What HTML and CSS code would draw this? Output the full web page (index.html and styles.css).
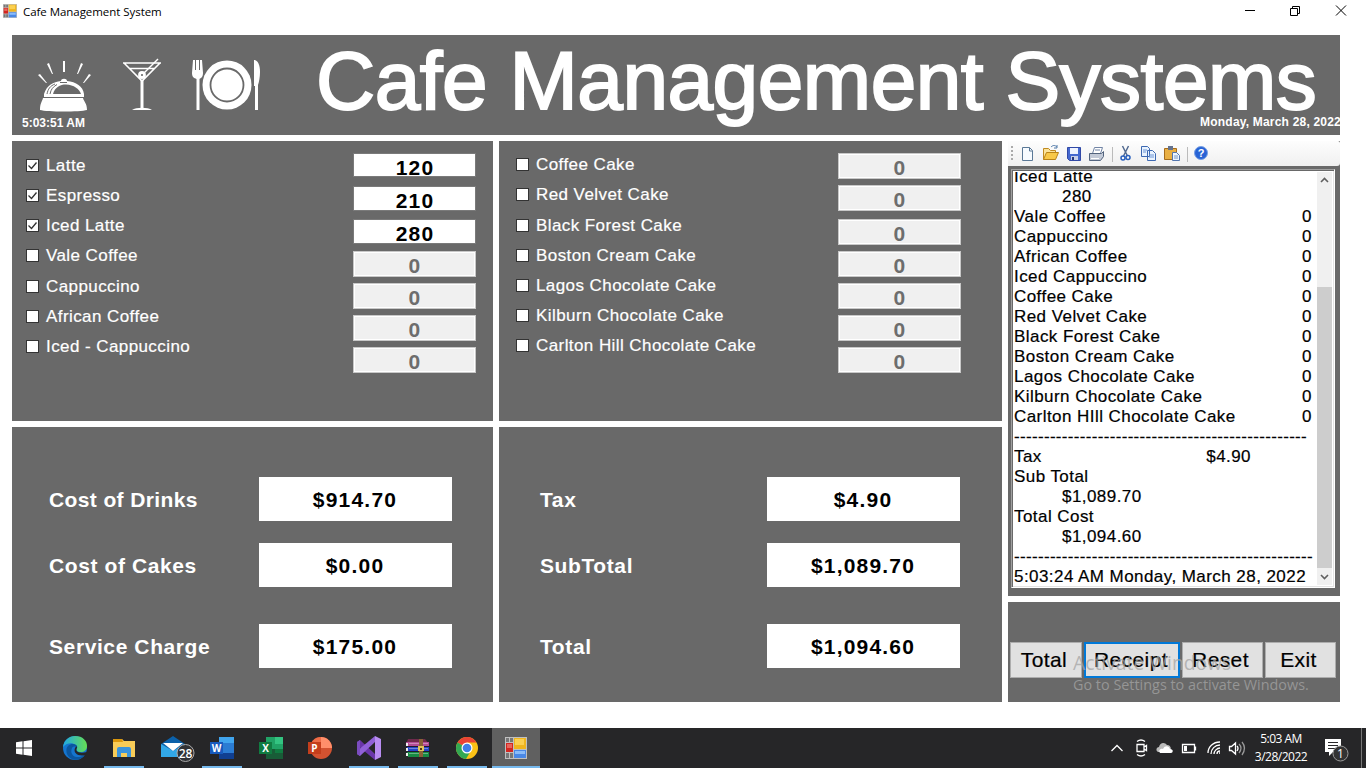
FILE: index.html
```html
<!DOCTYPE html>
<html lang="en">
<head>
<meta charset="utf-8">
<title>Cafe Management System</title>
<link rel="stylesheet" href="styles.css">
</head>
<body>
<div class="window">
  <div class="titlebar">
    <svg class="app-icon" width="14" height="14" viewBox="0 0 22 22"><use href="#forms"/></svg>
    <span class="caption">Cafe Management System</span>
    <svg class="controls" width="104" height="14" viewBox="0 0 104 14" fill="none" stroke="#000" stroke-width="1"><path d="M1 6.500h10"/><path d="M46.500 4.500h7v7h-7zM48.500 4.500v-2h7v7h-2"/><path d="M92 1.500l10 10M102 1.500l-10 10"/></svg>
  </div>
  <div class="header">
    <div class="brand">
      <div class="pictures">
        <svg class="bell" width="54" height="52" viewBox="0 0 54 52" fill="#fff"><path d="M25 1h2v11h-2zM9 4l2-1 4 11h-1zM43 3l2 1-5 10h-1zM0 15l2-1 7 9h-1zM51 14l2 1-7 8h-1z"/><path d="M6 34c3-9 9-12 17-13 0-3 6-3 6 0 9 1 16 5 17 13v3H6z"/><path d="M5 38h40c1 4 4 5 4 12-7 2-40 2-47 0 0-7 2-8 3-12z"/><path d="M7 37.500h38" stroke="#696969" stroke-width="1.200"/><path d="M15 34c2-7 7-9.500 13-9.500 8 .5 13 4 15 9.500z" fill="#696969"/><path d="M9 34c1-5 3-8 8-10M12 34c1-5 3-7 7-9.500M22 22.500h7" fill="none" stroke="#696969"/></svg>
        <svg class="martini" width="40" height="54" viewBox="0 0 40 54" fill="none" stroke="#fff"><path d="M1 5h38M2 5l18 18L38 5M8 10.500h24" stroke-width="1.600"/><path d="M36 1L22 15" stroke-width="1.500"/><circle cx="20" cy="17" r="2.500" stroke-width="2.800"/><path d="M20 22v28" stroke-width="3"/><path d="M10 52c4-3 16-3 20 0z" fill="#fff" stroke="none"/></svg>
        <svg class="plate" width="69" height="52" viewBox="0 0 69 52" fill="#fff"><path d="M1 1h2v10h1V1h3v10h1V1h2l1 13c0 4-2 5-3.500 6v31h-3V20C2 19 0 18 0 14z"/><path d="M62 1c4 0 6 5 6 12 0 5-1 10-2 13v25h-3V27h-1z"/><circle cx="35" cy="26" r="24.500"/><circle cx="35" cy="26" r="16.500" fill="none" stroke="#696969" stroke-width="1.800"/></svg>
      </div>
      <div class="time">5:03:51 AM</div>
    </div>
    <h1 class="title">Cafe Management Systems</h1>
    <div class="date">Monday, March 28, 2022</div>
  </div>
  <div class="main">
    <div class="column">
      <div class="panel items drinks">
        <div class="checks">
          <label class="check"><i class="box"><svg width="11" height="11"><path d="M1.500 5.500l3 3 5-6"/></svg></i><span>Latte</span></label>
          <label class="check"><i class="box"><svg width="11" height="11"><path d="M1.500 5.500l3 3 5-6"/></svg></i><span>Espresso</span></label>
          <label class="check"><i class="box"><svg width="11" height="11"><path d="M1.500 5.500l3 3 5-6"/></svg></i><span>Iced Latte</span></label>
          <label class="check"><i class="box"></i><span>Vale Coffee</span></label>
          <label class="check shifted"><i class="box"></i><span>Cappuccino</span></label>
          <label class="check"><i class="box"></i><span>African Coffee</span></label>
          <label class="check"><i class="box"></i><span>Iced - Cappuccino</span></label>
        </div>
        <div class="inputs">
          <div class="qty on first">120</div><div class="qty on">210</div><div class="qty on last">280</div>
          <div class="qty">0</div><div class="qty">0</div><div class="qty">0</div><div class="qty">0</div>
        </div>
      </div>
      <div class="panel costs">
        <div class="cost"><span class="tight">Cost of Drinks</span><b>$914.70</b></div>
        <div class="cost"><span>Cost of Cakes</span><b>$0.00</b></div>
        <div class="cost"><span>Service Charge</span><b>$175.00</b></div>
      </div>
    </div>
    <div class="column middle">
      <div class="panel items cakes">
        <div class="checks">
          <label class="check"><i class="box"></i><span>Coffee Cake</span></label>
          <label class="check"><i class="box"></i><span>Red Velvet Cake</span></label>
          <label class="check shifted"><i class="box"></i><span>Black Forest Cake</span></label>
          <label class="check"><i class="box"></i><span>Boston Cream Cake</span></label>
          <label class="check"><i class="box"></i><span>Lagos Chocolate Cake</span></label>
          <label class="check"><i class="box"></i><span>Kilburn Chocolate Cake</span></label>
          <label class="check"><i class="box"></i><span>Carlton Hill Chocolate Cake</span></label>
        </div>
        <div class="inputs">
          <div class="qty">0</div><div class="qty spaced">0</div><div class="qty">0</div><div class="qty">0</div><div class="qty">0</div><div class="qty">0</div><div class="qty">0</div>
        </div>
      </div>
      <div class="panel costs totals">
        <div class="cost"><span>Tax</span><b>$4.90</b></div>
        <div class="cost"><span>SubTotal</span><b>$1,089.70</b></div>
        <div class="cost"><span>Total</span><b>$1,094.60</b></div>
      </div>
    </div>
    <div class="column side">
      <div class="panel receipt-panel">
        <div class="toolbar">
          <svg width="332" height="25" viewBox="0 0 332 25">
            <path d="M4 5v16" stroke="#aaa" stroke-width="2" stroke-dasharray="2 2"/>
            <path d="M14.500 6.500h7l3 3v10h-10z" fill="#f7fbff" stroke="#5a7896"/><path d="M21.500 6.500v3.500h3" fill="none" stroke="#5a7896"/>
            <path d="M35.500 18.500v-11h5l2 2h5v3" fill="#fbe39a" stroke="#c08a20"/><path d="M35.500 18.500l3-7h12l-3 7z" fill="#f8c848" stroke="#b98318"/><path d="M43 6c2-2 4-2 6 0m0-2v3h-3" fill="none" stroke="#4f78a8"/>
            <path d="M59.500 6.500h13v13h-11l-2-2z" fill="#4468cf" stroke="#3149a6"/><path d="M62 7h8v6h-8z" fill="#eef3ff"/><path d="M63 15h7v4h-7z" fill="#c8d0e8"/><path d="M64 16h2v3h-2z" fill="#24367c"/>
            <path d="M84.500 12.500l2-6h8l-2 6" fill="#fff" stroke="#7184a5"/><path d="M81.500 12.500h12l2-2v5l-3 4h-11z" fill="#c3cad7" stroke="#53647e"/><path d="M83 17.500h8" stroke="#fff"/><path d="M87 9h5" stroke="#7184a5"/>
            <path d="M104.500 6v15M179.500 6v15" stroke="#bbb"/>
            <path d="M114.500 5l5 10M120.500 5l-5 10" fill="none" stroke="#536b91" stroke-width="1.500"/><circle cx="115" cy="17" r="2" fill="none" stroke="#285fbd" stroke-width="1.500"/><circle cx="120" cy="16.500" r="2" fill="none" stroke="#285fbd" stroke-width="1.500"/>
            <path d="M133.500 5.500h6l2 2v8h-8zM139.500 9.500h5l3 3v7h-8z" fill="#e9f3ff" stroke="#3d69b2"/><path d="M135 9h4M135 11h3M141 14h5M141 16h5" stroke="#6a94d5"/>
            <path d="M156.500 7.500h12v11h-12z" fill="#e9af43" stroke="#a66c1c"/><path d="M160 5h5v4h-5z" fill="#66738c"/><path d="M164.500 11.500h4l3 3v5h-7z" fill="#edf5ff" stroke="#5275ae"/><path d="M166 15h4M166 17h4" stroke="#7896c4"/>
            <circle cx="193" cy="12" r="6.500" fill="#2863d5" stroke="#79a1e4"/><text x="193" y="16" text-anchor="middle" class="help">?</text>
          </svg>
        </div>
        <div class="receipt">
          <div class="lines">
            <p>Iced Latte</p><p class="in">280</p>
            <p>Vale Coffee<span>0</span></p><p>Cappuccino<span>0</span></p><p>African Coffee<span>0</span></p><p>Iced Cappuccino<span>0</span></p><p>Coffee Cake<span>0</span></p><p>Red Velvet Cake<span>0</span></p><p>Black Forest Cake<span>0</span></p><p>Boston Cream Cake<span>0</span></p><p>Lagos Chocolate Cake<span>0</span></p><p>Kilburn Chocolate Cake<span>0</span></p><p>Carlton HIll Chocolate Cake<span>0</span></p>
            <p class="rule">-------------------------------------------------</p>
            <p class="tax">Tax<span>$4.90</span></p><p>Sub Total</p><p class="in">$1,089.70</p><p>Total Cost</p><p class="in">$1,094.60</p>
            <p class="rule">--------------------------------------------------</p>
            <p class="stamp">5:03:24 AM Monday, March 28, 2022</p>
          </div>
          <div class="scroll"><svg width="15" height="17" fill="none" stroke="#606060" stroke-width="1.600"><path d="M4 10l3.500-3.500L11 10"/></svg><div class="thumb"></div><svg width="15" height="17" fill="none" stroke="#606060" stroke-width="1.600"><path d="M4 7l3.500 3.500L11 7"/></svg></div>
        </div>
      </div>
      <div class="panel actions">
        <button class="total">Total</button><button class="focus">Receipt</button><button class="reset">Reset</button><button class="exit">Exit</button>
        <div class="watermark"><div class="wm-title">Activate Windows</div><div class="wm-sub">Go to Settings to activate Windows.</div></div>
      </div>
    </div>
  </div>
</div>
<div class="taskbar">
  <div class="task start"><svg width="16" height="16" viewBox="0 0 16 16" fill="#fff"><path d="M0 2.300L6.500 1.300v6.200H0zM7.500 1.200L16 0v7.500H7.500zM0 8.500h6.500v6.200L0 13.700zM7.500 8.500H16V16l-8.500-1.200z"/></svg></div>
  <div class="task"><svg width="24" height="24" viewBox="0 0 24 24"><defs><linearGradient id="eg"><stop stop-color="#20a7e5"/><stop offset="1" stop-color="#65df53"/></linearGradient></defs><circle cx="12" cy="12" r="12" fill="#1575cf"/><path d="M0 11C1 4 6 0 12 0c8 0 12 5 12 10 0 4-3 6-6 6-4 0-5-2-4-4 1-4-8-8-14-1z" fill="url(#eg)"/><path d="M9 12c-3 7 4 12 13 7-5 7-15 6-18-1-2-6 1-10 6-10 3 0 5 2 4 4-1-2-4-2-5 0z" fill="#0b569f"/><path d="M14 12c-2 3 1 6 10 4l-1 3c-8 2-13-2-11-7 1-2 2-2 2 0z" fill="#252628"/></svg></div>
  <div class="task running"><svg width="22" height="20" viewBox="0 0 22 20"><path d="M0 1h9l2 2h11v16H0z" fill="#f8cc58"/><path d="M0 1h9l1 3H0z" fill="#db970d"/><path d="M4 19v-8q0-2 2-2h10q2 0 2 2v8h-4v-4H8v4z" fill="#3b94dc"/></svg></div>
  <div class="task"><svg class="mail" width="35" height="27" viewBox="0 0 35 27"><path d="M0 9L12 1l12 8v13H0z" fill="#0b61aa"/><path d="M0 9l12 7 12-7v13H0z" fill="#32a8e8"/><path d="M2 8h20l-10 8z" fill="#fff"/><circle cx="24.500" cy="18" r="8.500" fill="#303236" stroke="#aaa"/><text x="24.500" y="22.500" text-anchor="middle" class="mail-count">28</text></svg></div>
  <div class="task running"><svg width="24" height="22" viewBox="0 0 24 22"><path d="M9 0h15v22H9z" fill="#2b7cd3"/><path d="M9 0h15v6H9z" fill="#41a5ee"/><path d="M9 16h15v6H9z" fill="#103f91"/><path d="M0 5h13v12H0z" fill="#185abd"/><text x="6.500" y="15" text-anchor="middle" class="office">W</text></svg></div>
  <div class="task"><svg width="24" height="22" viewBox="0 0 24 22"><path d="M7 0h17v22H7z" fill="#21a366"/><path d="M16 0h8v7h-8z" fill="#33c481"/><path d="M7 12h9v10H7z" fill="#185c37"/><path d="M16 12h8v10h-8z" fill="#107c41"/><path d="M7 16h17v6H7z" fill="#185c37"/><path d="M0 5h13v12H0z" fill="#107c41"/><text x="6.500" y="15" text-anchor="middle" class="office">X</text></svg></div>
  <div class="task"><svg width="24" height="22" viewBox="0 0 24 22"><circle cx="13" cy="11" r="11" fill="#d35230"/><path d="M13 0a11 11 0 0 1 11 11H13z" fill="#ff8f6b"/><path d="M13 0v11H2A11 11 0 0 1 13 0z" fill="#ed6c47"/><path d="M0 5h13v12H0z" fill="#c43e1c"/><text x="6.500" y="15" text-anchor="middle" class="office">P</text></svg></div>
  <div class="task running"><svg width="24" height="24" viewBox="0 0 24 24"><path d="M0 6l3-2 15 14v6L0 9z" fill="#6a36aa"/><path d="M0 15L18 0v6L3 20l-3-2z" fill="#9161d8"/><path d="M0 6l3-2v16l-3-2z" fill="#7b4cc0"/><path d="M18 0l6 3v18l-6 3z" fill="#b98df2"/></svg></div>
  <div class="task running"><svg width="24" height="20" viewBox="0 0 24 20"><path d="M2 1h17l4 5H0z" fill="#6f2a4c"/><path d="M0 4h23v4H0z" fill="#b44b96"/><path d="M1 9h22v4H1z" fill="#2445c8"/><path d="M1 14h22v5H2z" fill="#178b43"/><path d="M1 5v3M1 10v3M1 15v3" stroke="#eee" stroke-width="2"/><path d="M3 5.500h19M3 10.500h19M3 15.500h19" stroke="#fff" stroke-opacity=".35"/><path d="M13 1h4v18h-4z" fill="#8a6238"/><path d="M12 8h6v5h-6z" fill="#e2c55b"/><path d="M14 10h2v2h-2z" fill="#553514"/><path d="M0 8.500h12M18 8.500h6M0 13.500h12M18 13.500h6" stroke="#21182c"/></svg></div>
  <div class="task running"><svg width="22" height="22" viewBox="0 0 22 22"><circle cx="11" cy="11" r="11" fill="#fbc116"/><path d="M11 11L1.500 5.500A11 11 0 0 1 20.500 5.500H11z" fill="#e94335"/><path d="M1.500 5.500A11 11 0 0 0 10 22l5-8.500-4-2.500z" fill="#32a853"/><circle cx="11" cy="11" r="5.500" fill="#fff"/><circle cx="11" cy="11" r="4.300" fill="#3f7fe8"/></svg></div>
  <div class="task running active"><svg width="22" height="22" viewBox="0 0 22 22"><g id="forms"><path d="M0 0h22v22H0z" fill="#c0c0c0"/><path d="M1 1h3v4H1zM5 1h3v4H5zM1 16h3v5H1zM5 16h3v5H5z" fill="#777"/><path d="M9 1h12v11H9z" fill="#efb51f"/><path d="M10 2h9v6h-9z" fill="#fbd051"/><path d="M1 6h7v9H1z" fill="#d42620"/><path d="M2 7h5v4H2z" fill="#e8655c"/><path d="M9 13h12v8H9z" fill="#4a88e6"/><path d="M10 14h10v3H10z" fill="#8abcfa"/></g></svg></div>
  <svg class="tray" width="140" height="20" viewBox="0 0 140 20" fill="none" stroke="#fff" stroke-width="1.300">
    <path d="M1.500 13l5.500-5.500 5.500 5.500"/><path d="M27 6.500h7v7h-7zM34 9l2.500-1.500v5L34 11M27 3.500q4-3 8 0M27 16.500q4 3 8 0"/>
    <path d="M48 14c-3-2-1-5 1-5 1-5 6-5 8-2 5 0 5 7 1 7z" fill="#bbb" stroke="none"/><path d="M50 15c-2-3 1-5 3-4 2-4 6-3 7 0 4 0 3 4 1 4z" fill="#fff" stroke="none"/>
    <path d="M72.500 6.500h12v8h-12zM85.500 8.500v4"/><path d="M74 8h3v5h-3z" fill="#fff" stroke="none"/>
    <path d="M98 15C98 9 103 4 110 4M101 16c0-5 4-9 9-9M104 16c0-3 3-6 6-6M107 16c0-2 1-3 3-3"/><path d="M109 15h1"/>
    <path d="M119.500 8.500h2l4-3.500v11l-4-3.500h-2zM127 8q2 2 0 5"/><path d="M129 6q4 4 0 9M132 4q5 6 0 13" stroke="#999"/>
  </svg>
  <div class="clock"><div>5:03 AM</div><div>3/28/2022</div></div>
  <svg class="notice" width="26" height="26" viewBox="0 0 26 26"><path d="M1 3h16v13H9l-4 4v-4H1z" fill="#fff"/><path d="M4 6.500h10M4 9.500h10M4 12.500h7" stroke="#29292b"/><circle cx="16.500" cy="17.500" r="7.500" fill="#333" stroke="#999"/><text x="16.500" y="22" text-anchor="middle" class="badge">1</text></svg>
  <div class="peek"></div>
</div>
</body>
</html>
```
FILE: styles.css
```css
* { box-sizing: border-box; }
body { margin: 0; width: 1366px; height: 768px; overflow: hidden; background: #fff; font-family: "Liberation Sans", Arial, sans-serif; display: flex; flex-direction: column; }
svg { display: block; flex: none; }
p { margin: 0; }
.window { height: 728px; padding-left: 12px; }
.titlebar { height: 35px; display: flex; align-items: flex-start; margin-left: -9px; padding-top: 4px; }
.caption { font: 11.500px/16px "Open Sans", sans-serif; letter-spacing: -0.050px; margin-left: 6px; white-space: nowrap; }
.controls { margin: 0 18px 0 auto; }
.header { position: relative; width: 1328px; height: 100px; background: #696969; color: #fff; display: flex; overflow: hidden; }
.brand { width: 304px; flex: none; padding: 23px 0 0 10px; }
.pictures { display: flex; height: 57px; }
.bell { margin: 2px 0 0 16px; }
.martini { margin-left: 30px; }
.plate { margin: 1px 0 0 30px; }
.time, .date { font-size: 12px; line-height: 16px; font-weight: bold; }
.title { margin: 0; font-size: 82px; line-height: 92px; font-weight: normal; letter-spacing: -0.500px; white-space: nowrap; -webkit-text-stroke: 2px #fff; }
.date { position: absolute; right: -1px; bottom: 5px; letter-spacing: 0.200px; }
.main { display: flex; gap: 6px; margin-top: 6px; }
.column { width: 481px; display: flex; flex-direction: column; gap: 6px; }
.middle { width: 503px; }
.side { width: 332px; }
.panel { background: #696969; }
.items { height: 280px; display: flex; justify-content: space-between; padding: 12px 17px 0 14px; color: #fff; }
.drinks .checks { padding-top: 2px; }
.cakes { padding: 12px 41px 0 17px; }
.cakes .checks { padding-top: 1px; }
.check { display: flex; align-items: center; gap: 7px; height: 20px; margin-bottom: 10px; font-size: 17px; line-height: 20px; letter-spacing: 0.420px; white-space: nowrap; -webkit-text-stroke: 0.200px; }
.check span { padding-top: 2px; }
.check.shifted { margin-top: 11px; }
.box { width: 13px; height: 13px; border: 1px solid #333; background: #fff; }
.box path { fill: none; stroke: #333; stroke-width: 1.300; }
.inputs { width: 123px; display: flex; flex-direction: column; }
.qty { height: 26px; flex: none; margin-bottom: 6px; padding-left: 1px; border: 1px solid #c8c8c8; outline: 1px solid #fff; outline-offset: -2px; background: #f0f0f0; color: #6d6d6d; font-size: 21px; line-height: 28px; font-weight: bold; letter-spacing: 1.200px; text-align: center; overflow: hidden; }
.qty.on { height: 25px; margin-bottom: 8px; border-color: #7a7a7a; background: #fff; color: #000; outline: 0; }
.qty.first { height: 24px; margin-bottom: 9px; }
.qty.last { margin-bottom: 7px; }
.qty.spaced { margin-bottom: 8px; }
.costs { height: 275px; padding: 50px 41px 0 37px; }
.totals { padding: 50px 42px 0 41px; }
.cost { height: 44px; display: flex; justify-content: space-between; align-items: center; color: #fff; font-size: 21px; font-weight: bold; letter-spacing: 0.600px; margin-bottom: 22px; }
.cost span { padding-top: 2px; }
.cost .tight { letter-spacing: 0.380px; }
.cost:last-child { margin-top: 37px; }
.cost b { width: 193px; height: 44px; line-height: 46px; padding-right: 1px; background: #fff; color: #000; text-align: center; letter-spacing: 1.200px; }
.receipt-panel { height: 455px; }
.toolbar { height: 25px; background: linear-gradient(#fdfdfd, #f0f0f0); border-radius: 0 2px 3px 0; }
.help { fill: #fff; font: bold 11px "Liberation Sans", sans-serif; }
.receipt { margin: 3px 0 0 3px; width: 324px; height: 419px; background: #fff; border: 1px solid #a0a0a0; border-right-color: #fff; border-bottom-color: #fff; box-shadow: inset 1px 1px #696969, inset -1px -1px #e3e3e3; padding: 2px; display: flex; overflow: hidden; }
.lines { width: 303px; margin-top: -5px; clip-path: inset(5px 0 0 0); flex: none; font-size: 17px; line-height: 20px; letter-spacing: 0.440px; white-space: nowrap; -webkit-text-stroke: 0.200px; }
.lines p { height: 20px; display: flex; justify-content: space-between; padding-right: 5px; }
.lines .in { padding-left: 48px; }
.lines .tax { padding-right: 66px; }
.lines .rule { letter-spacing: 0.320px; }
.lines .stamp { letter-spacing: 0.440px; }
.scroll { width: 15px; height: 413px; background: #f0f0f0; display: flex; flex-direction: column; }
.thumb { margin-top: 98px; height: 281px; background: #cdcdcd; }
.actions { position: relative; height: 100px; padding: 40px 2px 0; display: flex; gap: 2px; }
button { height: 36px; padding: 0 4px 0 0; border: 1px solid #adadad; background: #e1e1e1; color: #000; font: 21px "Liberation Sans", Arial, sans-serif; letter-spacing: 0.400px; -webkit-text-stroke: 0.200px; }
.total { width: 72px; }
.focus { width: 96px; border: 2px solid #0078d7; padding-right: 2px; }
.reset { width: 81px; }
.exit { width: 71px; }
.watermark { position: absolute; left: 65px; top: 48px; color: rgba(165,165,165,.75); font-family: "Open Sans", sans-serif; white-space: nowrap; }
.wm-title { font-size: 19.300px; line-height: 26px; }
.wm-sub { font-size: 14.400px; line-height: 18px; }
.taskbar { height: 40px; background: #262628; display: flex; align-items: center; color: #fff; }
.task { width: 48px; height: 40px; margin-right: 1px; display: flex; align-items: center; justify-content: center; flex: none; }
.start { margin-right: 3px; }
.running { background: linear-gradient(#76b9ed, #76b9ed) center bottom / 40px 2px no-repeat; }
.active { background: linear-gradient(#76b9ed, #76b9ed) center bottom / 48px 2px no-repeat, #606060; }
.mail { margin-left: 11px; }
.mail-count { fill: #fff; font: 600 12px "Open Sans", sans-serif; }
.office { fill: #fff; font: bold 10px "Open Sans", sans-serif; }
.tray { margin-left: 569px; }
.clock { width: 64px; margin-left: -1px; text-align: center; font: 12px/18px "Open Sans", sans-serif; letter-spacing: -0.500px; }
.notice { margin-left: 11px; margin-top: 2px; }
.badge { fill: #fff; font: 12px "Open Sans", sans-serif; }
.peek { width: 1px; height: 40px; background: #777; margin-left: 11px; }
```
